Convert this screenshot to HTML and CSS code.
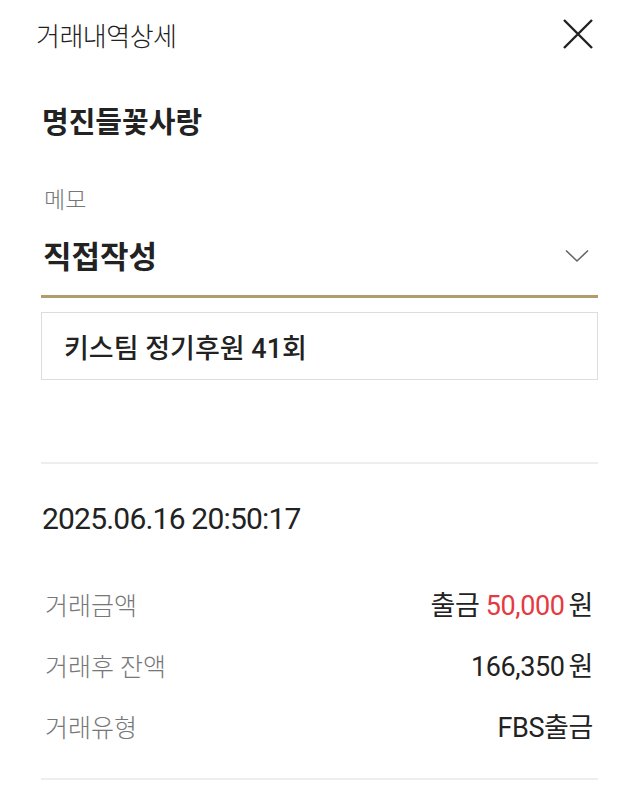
FILE: index.html
```html
<!DOCTYPE html>
<html lang="ko">
<head>
  <meta charset="UTF-8" />
  <meta name="viewport" content="width=device-width, initial-scale=1" />
  <title>거래내역상세</title>
  <link rel="stylesheet" href="styles.css">
</head>
<body>

  <div class="header">
    <div class="header-title">거래내역상세</div>
    <svg class="close" width="32" height="32" viewBox="0 0 32 32">
      <path d="M2 2 L30 30 M30 2 L2 30" stroke="#222" stroke-width="2.4" fill="none" />
    </svg>
  </div>

  <div class="content">
    <div class="name">명진들꽃사랑</div>

    <div class="memo-label">메모</div>
    <div class="select-row">
      <div class="select-value">직접작성</div>
      <svg class="chevron" width="24" height="14" viewBox="0 0 24 14">
        <path d="M1 1.5 L12 12 L23 1.5" stroke="#666" stroke-width="1.6" fill="none" />
      </svg>
    </div>

    <div class="memo-box">키스팀 정기후원 41회</div>

    <div class="divider first"></div>

    <div class="date">2025.06.16 20:50:17</div>

    <div class="rows">
      <div class="row">
        <div class="label">거래금액</div>
        <div class="value">출금 <span class="red">50,000</span><span class="won">원</span></div>
      </div>
      <div class="row">
        <div class="label">거래후 잔액</div>
        <div class="value">166,350<span class="won">원</span></div>
      </div>
      <div class="row">
        <div class="label">거래유형</div>
        <div class="value">FBS출금</div>
      </div>
    </div>

    <div class="divider last"></div>
  </div>

</body>
</html>
```

FILE: styles.css
```css
body {
  margin: 0;
  font-family: Roboto, "Noto Sans CJK KR", sans-serif;
  background-color: #fff;
  color: #222;
}

.header {
  height: 68px;
  display: flex;
  justify-content: space-between;
  align-items: center;
  padding: 0 46px 0 36px;
}

.header-title {
  font-size: 26px;
  font-weight: 300;
  letter-spacing: -0.5px;
}

.content {
  padding: 0 42px 0 41px;
}

.name {
  margin-top: 35px;
  font-size: 29px;
  line-height: 40px;
  font-weight: 700;
  padding-left: 1px;
}

.memo-label {
  margin-top: 42px;
  font-size: 23px;
  line-height: 32px;
  color: #777;
  font-weight: 300;
  padding-left: 3px;
}

.select-row {
  height: 78px;
  display: flex;
  justify-content: space-between;
  align-items: center;
  border-bottom: 3px solid #b49b6e;
  padding: 0 9px 0 2px;
}

.select-value {
  font-size: 31px;
  font-weight: 700;
  margin-top: -4px;
}

.memo-box {
  margin-top: 14px;
  height: 66px;
  border: 1px solid #ddd;
  display: flex;
  align-items: center;
  padding-left: 22px;
  font-size: 27px;
  font-weight: 500;
}

.divider {
  height: 2px;
  background-color: #eee;
}

.divider.first {
  margin-top: 82px;
}

.divider.last {
  margin-top: 22px;
}

.date {
  margin-top: 37px;
  font-size: 30px;
  line-height: 36px;
  letter-spacing: -0.8px;
  padding-left: 1px;
}

.rows {
  margin-top: 36px;
}

.row {
  height: 61px;
  display: flex;
  justify-content: space-between;
  align-items: center;
  padding: 0 5px 0 4px;
}

.label {
  font-size: 25px;
  color: #777;
  font-weight: 300;
}

.value {
  font-size: 27px;
  letter-spacing: -0.4px;
}

.red {
  color: #e53a3f;
}

.won {
  margin-left: 4px;
}
```
